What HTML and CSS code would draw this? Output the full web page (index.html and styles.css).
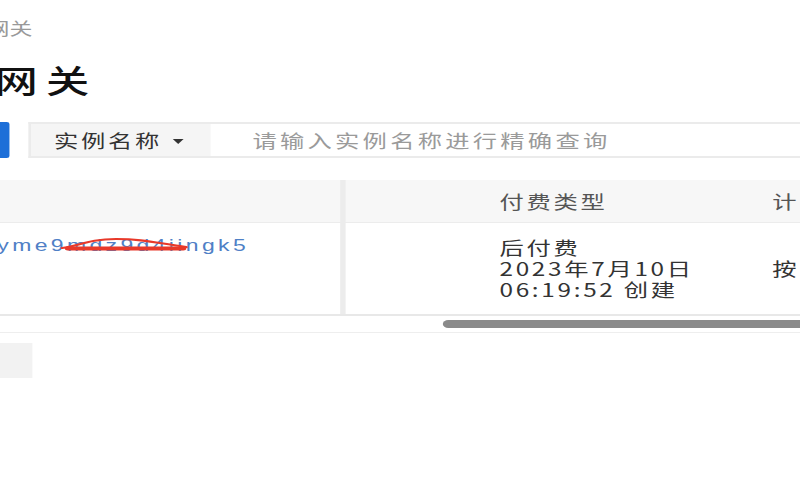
FILE: index.html
```html
<!DOCTYPE html>
<html lang="zh">
<head>
<meta charset="utf-8">
<link rel="stylesheet" href="styles.css">
</head>
<body>
<div class="stage">
  <div class="crumb">网关</div>
  <h1 class="title">网关</h1>
  <div class="search-row">
    <div class="btn-blue"></div>
    <div class="search">
      <div class="select">实例名称<span class="caret"></span></div>
      <div class="placeholder">请输入实例名称进行精确查询</div>
    </div>
  </div>
  <div class="table">
    <div class="row head">
      <div class="cell c1"></div>
      <div class="cell c2"></div>
      <div class="cell c3">付费类型</div>
      <div class="cell c4">计</div>
    </div>
    <div class="row body">
      <div class="cell c1">
        <span class="link">yme9mdz9d4iingk5<svg class="scribble" viewBox="0 0 96 16" width="96" height="16"><path d="M2 11 C 14 9, 22 2, 42 2 S 72 6, 94 10" fill="none" stroke="#e8392a" stroke-width="2.2" stroke-linecap="round"/><path d="M6 11.5 L 92 11.5" fill="none" stroke="#e8392a" stroke-width="4" stroke-linecap="round"/></svg></span>
      </div>
      <div class="cell c2"></div>
      <div class="cell c3">后付费<br>2023年7月10日<br>06:19:52 创建</div>
      <div class="cell c4 mid">按</div>
    </div>
  </div>
  <div class="scroll"><div class="thumb"></div></div>
  <div class="pager"></div>
</div>
</body>
</html>
```
FILE: styles.css
```css
html, body {
  margin: 0;
  padding: 0;
  background: #fff;
  overflow: hidden;
}
body {
  font-family: "Noto Sans CJK SC", "Noto Sans", sans-serif;
  color: #333;
  width: 800px;
  height: 500px;
}
/* the whole screen is shown horizontally stretched */
.stage {
  width: 593px;
  padding-top: 16px;
  transform: scaleX(1.35);
  transform-origin: 0 0;
}
.crumb {
  font-size: 17px;
  line-height: 24px;
  color: #999;
  margin-left: -10px;
}
.title {
  margin: 17px 0 0 -4px;
  font-size: 32px;
  line-height: 44px;
  font-weight: 500;
  color: #111;
  letter-spacing: 6px;
}
.search-row {
  display: flex;
  margin-top: 21px;
  height: 36px;
}
.btn-blue {
  width: 7px;
  background: #1d6fd8;
  border-radius: 0 2px 2px 0;
}
.search {
  margin-left: 14px;
  flex: 1;
  display: flex;
  border: 2px solid #ebebeb;
  border-right: none;
  box-sizing: border-box;
}
.select {
  width: 133px;
  background: #f5f5f5;
  font-size: 18px;
  line-height: 32px;
  color: #333;
  padding-left: 17px;
  box-sizing: border-box;
  letter-spacing: 2px;
  display: flex;
  align-items: center;
}
.caret {
  display: inline-block;
  width: 0;
  height: 0;
  border-left: 4.5px solid transparent;
  border-right: 4.5px solid transparent;
  border-top: 5px solid #333;
  margin-left: 8px;
  margin-top: 2px;
}
.placeholder {
  padding-left: 31px;
  font-size: 18px;
  line-height: 32px;
  color: #9a9a9a;
  letter-spacing: 2.4px;
}
.table {
  margin-top: 22px;
}
.row {
  display: grid;
  grid-template-columns: 256px 94px 202px 1fr;
}
.head {
  height: 42px;
  background: #f7f7f7;
  border-bottom: 1px solid #ececec;
}
.body {
  height: 91px;
  border-bottom: 2px solid #e8e8e8;
}
.cell {
  font-size: 18px;
  letter-spacing: 2px;
  color: #333;
  padding-left: 20px;
  box-sizing: border-box;
}
.head .cell {
  line-height: 42px;
  color: #555;
}
.c1 {
  padding-left: 0;
  border-right: 4px solid #ececec;
}
.body .cell {
  padding-top: 14px;
  line-height: 21px;
}
.body .mid {
  padding-top: 35px;
}
.body .c1 {
  padding-top: 10px;
}
.link {
  position: relative;
  display: inline-block;
  margin-left: -2px;
  color: #4f80c6;
  font-family: "Liberation Sans", sans-serif;
  font-size: 17px;
  letter-spacing: 2.5px;
  line-height: 20px;
}
.scribble {
  position: absolute;
  left: 46px;
  top: 1px;
}
.scroll {
  height: 16px;
  border-bottom: 1px solid #eee;
  display: flex;
  align-items: center;
}
.thumb {
  margin-left: 328px;
  flex: 1;
  height: 8px;
  border-radius: 4px 0 0 4px;
  background: #8a8a8a;
}
.pager {
  margin-top: 10px;
  width: 24px;
  height: 35px;
  background: #f2f2f2;
}
```
